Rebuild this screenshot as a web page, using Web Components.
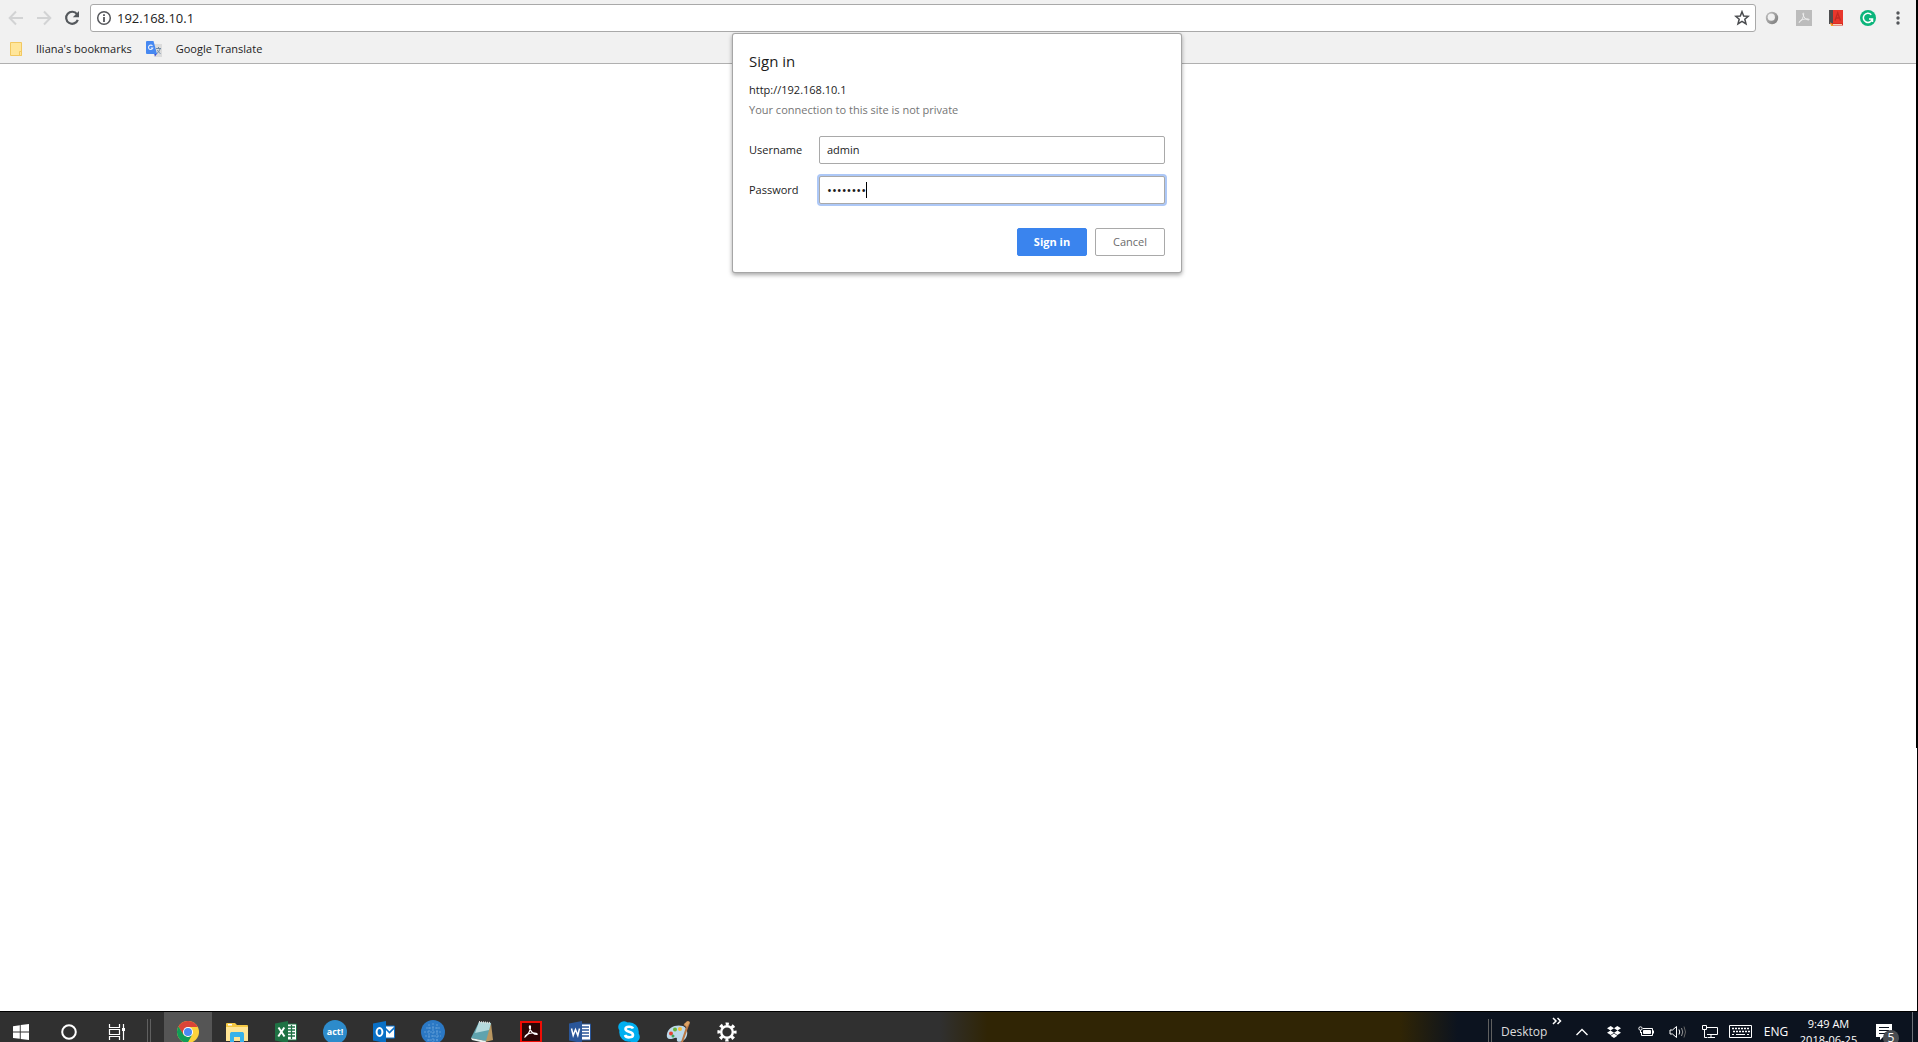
<!DOCTYPE html>
<html lang="en">
<head>
<meta charset="utf-8">
<title>192.168.10.1</title>
<style>
  html, body { margin: 0; height: 100%; }
  body { font: 11px/16px "Open Sans", "Noto Sans", sans-serif; color: #1c1c1c; background: #fff; overflow: hidden; }
</style>
</head>
<body>
<desktop-screen></desktop-screen>

<script>
const define = (name, html, setup) => customElements.define(name, class extends HTMLElement {
  constructor() {
    super();
    const root = this.attachShadow({ mode: 'open' });
    const t = document.createElement('template');
    t.innerHTML = '<style>*{box-sizing:border-box}svg{display:block;flex:none}button{font:inherit;color:inherit;background:none;border:0;padding:0;margin:0}</style>' + html;
    root.append(t.content.cloneNode(true));
    if (setup) setup.call(this, root);
  }
});

const icons = {
  back: '<svg width="16" height="16" fill="none" stroke="#d2d3d4" stroke-width="2"><path d="M15 8H2M8 1.5L1.7 8L8 14.500"/></svg>',
  forward: '<svg width="16" height="16" fill="none" stroke="#d2d3d4" stroke-width="2"><path d="M1 8H14M8 1.500L14.300 8L8 14.500"/></svg>',
  reload: '<svg width="16" height="16"><path d="M13 4.200A6 6 0 1 0 13.800 9.800" fill="none" stroke="#54585c" stroke-width="2.200"/><path d="M15 1V7.200H8.800Z" fill="#54585c"/></svg>',
  info: '<svg width="16" height="16"><circle cx="8" cy="8" r="6.300" fill="none" stroke="#54565a" stroke-width="1.500"/><path d="M7.100 4.200h1.800v1.700H7.100zM7.100 7h1.800v5H7.100z" fill="#54565a"/></svg>',
  star: '<svg width="16" height="16"><path d="M8 1.700L9.700 6L14.300 6.300L10.800 9.300L12 13.900L8 11.400L4 13.900L5.200 9.300L1.700 6.300L6.300 6Z" fill="none" stroke="#4a4c4f" stroke-width="1.500"/></svg>',
  ball: '<svg width="16" height="16"><defs><linearGradient id="g" x1="0" y1="0" x2="1" y2="1"><stop offset="0" stop-color="#c4c4c4"/><stop offset="1" stop-color="#777"/></linearGradient></defs><circle cx="8" cy="8" r="6.200" fill="url(#g)"/><circle cx="7.300" cy="7.200" r="3.600" fill="#f0f0f0"/></svg>',
  pdfgray: '<svg width="16" height="16"><path d="M0 0h16v16H0z" fill="#bcbcbc"/><path d="M3 12.500C5.500 11 8 7 7.700 3.500C7.500 2.500 6.500 3 7 4.500C8 8 10 10 13 10C14 9.500 12 8.500 9 9C6 9.500 3 11 3 12.500Z" fill="none" stroke="#eee"/></svg>',
  book: '<svg width="14" height="16"><path d="M0 0h4v14H0z" fill="#4d4d4f"/><path d="M4 0h10v14H4z" fill="#e8372c"/><path d="M1 13h13v2.500H3z" fill="#d92d22"/><path d="M4 14h9v1H4z" fill="#f5d3b8"/><path d="M6 10.500L8.700 3L11.400 10.500M7 8h3.600" fill="none" stroke="#c22a22" stroke-width="1.300"/><path d="M1 12l4 4H2z" fill="#f5a623"/></svg>',
  grammar: '<svg width="16" height="16"><circle cx="8" cy="8" r="8" fill="#0bb57b"/><path d="M11.300 4.700A4.600 4.600 0 1 0 12.400 9H9M12.500 9V12" fill="none" stroke="#fff" stroke-width="1.500"/></svg>',
  menu: '<svg width="16" height="16" fill="#54565a"><circle cx="8" cy="3" r="1.700"/><circle cx="8" cy="8" r="1.700"/><circle cx="8" cy="13" r="1.700"/></svg>',
  folder: '<svg width="12" height="14"><path d="M.5.500h11v13H.500z" fill="#ffe69b" stroke="#f2c861"/><path d="M9.500 9.500h2v4h-2z" fill="#ffe69b" stroke="#f2c861"/></svg>',
  translate: '<svg width="16" height="16"><path d="M7 3h9v13H8z" fill="#dcdcdc"/><path d="M10 7.500h5M12.500 6v2M14 8c-.5 2-2 4-3.500 4.500M11.500 9c.5 1.500 2 3 3 3.500" fill="none" stroke="#708aa5"/><path d="M8 12h3.500L9 15.500z" fill="#3b4fd0"/><path d="M1 0h6.500l3.500 13H1a1 1 0 0 1-1-1V1a1 1 0 0 1 1-1z" fill="#4688f1"/><path d="M6.500 5A2.200 2.200 0 1 0 6.800 7H4.800" fill="none" stroke="#e4edfb" stroke-width="1.100"/></svg>',
  windows: '<svg width="16" height="16" fill="#fff"><path d="M0 2.200L6.800 1.200V7.500H0zM7.700 1L16 0V7.500H7.700zM0 8.400H6.800V14.800L0 13.900zM7.700 8.400H16V16L7.700 15z"/></svg>',
  cortana: '<svg width="16" height="16"><circle cx="8" cy="8" r="6.800" fill="none" stroke="#fff" stroke-width="2"/></svg>',
  taskview: '<svg width="18" height="16" fill="none" stroke="#fff"><path d="M1.500 0V3.500H11.500V0M1.500 16V12.500H11.500V16M1.500 5.500h10v5h-10zM15.500 0v16" stroke-width="1.200"/><path d="M14 4h3v3h-3z" fill="#fff" stroke="none"/></svg>',
  chrome: '<svg width="22" height="22" viewBox="0 0 48 48"><circle cx="24" cy="24" r="24" fill="#fdd23c"/><path d="M3.200 12A24 24 0 0 1 44.800 12L45 13H24L13.500 30Z" fill="#db4437"/><path d="M3.200 12A24 24 0 0 0 23 48L33.500 29.500L24 35L14 29.500Z" fill="#109d58"/><circle cx="24" cy="24" r="11" fill="#fff"/><circle cx="24" cy="24" r="8.800" fill="#4a8af4"/></svg>',
  explorer: '<svg width="22" height="20"><path d="M0 2a1 1 0 0 1 1-1h8l2 2h10a1 1 0 0 1 1 1v15H0z" fill="#f5c944"/><path d="M0 5h22v14H0z" fill="#ffe595"/><path d="M2 2h4v1.500H2z" fill="#fff"/><path d="M4 20V11.500L5 10H17L18 11.500V20H14V15H8V20z" fill="#37b2ea"/></svg>',
  excel: '<svg width="22" height="22"><path d="M12 3h9.500v16H12z" fill="#fff" stroke="#1e7145"/><path d="M13 6h7M13 9h7M13 12h7M13 15h7M16.500 4v14" stroke="#1e7145" stroke-width="1.300"/><path d="M0 2.500L13 0v22L0 19.500z" fill="#1f7244"/><path d="M3.500 6.500l6 9M9.300 6.500l-6 9" stroke="#fff" stroke-width="2"/></svg>',
  outlook: '<svg width="22" height="22"><path d="M12 5h9.500v12H12z" fill="#fff" stroke="#0f70c7"/><path d="M12 7l4.500 4.500L22 6" fill="none" stroke="#0f70c7" stroke-width="1.600"/><path d="M0 2.500L13 0v22L0 19.500z" fill="#0970c6"/><ellipse cx="6.500" cy="11" rx="2.900" ry="3.900" fill="none" stroke="#fff" stroke-width="2"/></svg>',
  globe: '<svg width="24" height="24"><circle cx="12" cy="12" r="12" fill="#2b78c4"/><path d="M5 8h14M3 12h18M4 16h16M6 20h12M8 4v17M12 3v19M16 4v17" stroke="#69a5dc" stroke-width=".8" stroke-dasharray="2 1"/></svg>',
  notepad: '<svg width="22" height="22"><path d="M8 1L20 2L22 19L14 21z" fill="#b99761"/><path d="M8 1L20 2L15 20L0 17z" fill="#5fa3ae"/><path d="M8 1L20 2L18 9L4 12z" fill="#b5dade"/><path d="M0 17l15 3-1 2-13-3z" fill="#e9f3f0"/><path d="M8 1L20 2" stroke="#ddd" stroke-width="2" stroke-dasharray="1 1"/></svg>',
  acrobat: '<svg width="22" height="22"><path d="M1 1h20v20H1z" fill="#2b0605" stroke="#f00d05" stroke-width="2"/><path d="M5 16C8 14 11 9 10.500 5.500C10 4 9 5 9.500 7C11 11 14 13.500 17 13.500C18 12.500 15 11.800 12 12C8 12.500 5 14.500 5 16Z" fill="none" stroke="#fff" stroke-width="1.200"/></svg>',
  word: '<svg width="22" height="22"><path d="M12 3h9.500v16H12z" fill="#fff" stroke="#2a5699"/><path d="M13 6h7M13 9h7M13 12h7M13 15h7" stroke="#2a5699" stroke-width="1.300"/><path d="M0 2.500L13 0v22L0 19.500z" fill="#2a5699"/><path d="M2.500 7.500l1.700 7L6.500 8.500l2.300 6 1.700-7" fill="none" stroke="#fff" stroke-width="1.500"/></svg>',
  skype: '<svg width="22" height="22"><circle cx="11" cy="11" r="9.800" fill="#00aff0"/><circle cx="6" cy="6" r="5.800" fill="#00aff0"/><circle cx="16" cy="16" r="5.800" fill="#00aff0"/><path d="M15 7.500C14 5 7.500 5 7.500 8C7.500 11.500 15 10 15 14C15 17 8 17.200 7 14" fill="none" stroke="#fff" stroke-width="2.600"/></svg>',
  paint: '<svg width="24" height="22"><path d="M1 13C2 6 10 3 17 5C23 8 22 16 18 19C14 22 10 21 11 18C11 15 7 18 4 18C1 18 .5 16 1 13Z" fill="#bcd9ea"/><circle cx="5" cy="12.500" r="2" fill="#e34332"/><circle cx="9" cy="8.500" r="2" fill="#6ab53a"/><circle cx="14" cy="8" r="2" fill="#f4bd38"/><circle cx="7" cy="15" r="1.500" fill="#42a65b"/><path d="M15 21L20 6L17.500 4L21 0L24 2L22 7L17 21z" fill="#bb7845"/><path d="M18 3l4-3 2 1-3 5z" fill="#dca466"/></svg>',
  gear: '<svg width="20" height="20"><circle cx="10" cy="10" r="8" fill="none" stroke="#fff" stroke-width="3.200" stroke-dasharray="3.140 3.143" stroke-dashoffset="1.570"/><circle cx="10" cy="10" r="5.800" fill="none" stroke="#fff" stroke-width="2.400"/></svg>',
  up: '<svg width="14" height="14"><path d="M1.500 10L7 4.500L12.500 10" fill="none" stroke="#fff" stroke-width="1.400"/></svg>',
  dropbox: '<svg width="14" height="12" fill="#fff"><path d="M3.700 0L7 2.200L3.500 4.400L0 2.200zM10.300 0L14 2.200L10.500 4.400L7 2.200zM3.500 4.600L7 6.800L3.700 9L0 6.800zM10.500 4.600L14 6.800L10.300 9L7 6.800zM3.600 9.700L7 7.600L10.400 9.700L7 12z"/></svg>',
  battery: '<svg width="16" height="12" fill="none" stroke="#fff"><path d="M5 2.500h9.500v7h-11V6M15.500 4.500v3"/><path d="M5.500 4.500h7v3h-7z" fill="#fff"/><circle cx="2.500" cy="2.500" r="1.700"/><path d="M2.500 4v3"/></svg>',
  volume: '<svg width="18" height="14" fill="none" stroke="#fff"><path d="M1 5h2.500L7.500 1.500v11L3.500 9H1z"/><path d="M10 4.500q1.500 2.500 0 5"/><path d="M12.500 3q2.500 4 0 8" stroke="#999"/><path d="M15 1.500q3 5.500 0 11" stroke="#666"/></svg>',
  network: '<svg width="16" height="14" fill="none" stroke="#fff"><path d="M5 2.500h10.500v7H5M9 9.500v3M6 12.500h7M.5.500h4v4h-4zM2.500 5v7.500h3"/></svg>',
  keyboard: '<svg width="24" height="14" fill="none" stroke="#fff"><path d="M.5.500h22v12H.500z"/><path d="M3 3.500h18M4 6.500h17" stroke-dasharray="2 1" stroke-width="1.500"/><path d="M3 9.500h2M7 9.500h9M18 9.500h2"/></svg>',
  note: '<svg width="16" height="16" fill="none"><path d="M0 0h16v13H7l-3 3v-3H0z" fill="#fff"/><path d="M3 3.500h10M3 6.500h10M3 9.500h7" stroke="#0c131f"/></svg>'
};

define('ui-icon', '<style>:host{display:flex;align-items:center;justify-content:center}</style><div></div>', function (root) {
  root.querySelector('div').innerHTML = icons[this.getAttribute('name')] || '';
});

define('browser-toolbar', `
<style>
  :host { display: flex; align-items: center; padding: 4px 4px 0 2px; }
  button { height: 28px; flex: none; }
  .nav { width: 28px; margin: 0; }
  .ext { width: 32px; }
  .address { flex: 1; display: flex; align-items: center; gap: 5px; height: 28px; margin-left: 4px; padding: 0 5px;
    border: 1px solid #a9a9a9; border-radius: 3px; background: #fff; }
  input { flex: 1; min-width: 0; border: 0; outline: 0; padding: 0; background: none; color: #222; font: 13px/20px "Open Sans", "Noto Sans", sans-serif; }
</style>
<button class="nav" aria-label="Back"><ui-icon name="back"></ui-icon></button>
<button class="nav" aria-label="Forward"><ui-icon name="forward"></ui-icon></button>
<button class="nav" aria-label="Reload"><ui-icon name="reload"></ui-icon></button>
<div class="address">
  <ui-icon name="info"></ui-icon>
  <input type="text" aria-label="Address" value="192.168.10.1">
  <ui-icon name="star"></ui-icon>
</div>
<button class="ext" aria-label="Extension"><ui-icon name="ball"></ui-icon></button>
<button class="ext" aria-label="PDF"><ui-icon name="pdfgray"></ui-icon></button>
<button class="ext" aria-label="Dictionary"><ui-icon name="book"></ui-icon></button>
<button class="ext" aria-label="Grammar"><ui-icon name="grammar"></ui-icon></button>
<button class="nav" aria-label="Menu"><ui-icon name="menu"></ui-icon></button>`);

define('bookmark-bar', `
<style>
  :host { display: flex; align-items: center; gap: 14px; height: 32px; padding: 2px 10px 0; border-bottom: 1px solid #b0b0b0; }
  a { display: flex; align-items: center; gap: 14px; color: #1c1c1c; text-decoration: none; }
</style>
<a href="#"><ui-icon name="folder"></ui-icon>Iliana's bookmarks</a>
<a href="#"><ui-icon name="translate"></ui-icon>Google Translate</a>`);

define('sign-in-dialog', `
<style>
  :host { display: block; width: 448px; padding: 16px; background: #fff; border-radius: 2px; box-shadow: 0 0 0 1px #a6a6a6, 0 2px 4px 1px rgba(0,0,0,.35); }
  h1 { margin: 0 0 8px; font-size: 15px; line-height: 22px; font-weight: 400; }
  p { margin: 0; line-height: 20px; }
  .muted { color: #757575; }
  form { display: grid; grid-template-columns: 54px 1fr; column-gap: 16px; row-gap: 12px; align-items: center; margin-top: 16px; }
  input { width: 100%; height: 28px; padding: 0 7px 1px; border: 1px solid #a9a9a9; border-radius: 2px; outline: 0; background: #fff;
    color: #1c1c1c; font: 11px/16px "Open Sans", "Noto Sans", sans-serif; }
  .secret { position: relative; display: flex; }
  .secret input { font-size: 13px; box-shadow: 0 0 0 2px #adc8f7; }
  .caret { position: absolute; left: 47px; top: 6px; width: 1px; height: 16px; background: #000; }
  .actions { grid-column: 1 / -1; display: flex; justify-content: flex-end; gap: 8px; margin-top: 12px; }
  .actions button { width: 70px; height: 28px; border: 1px solid #a9a9a9; border-radius: 2px; color: #6b6b6b; }
  .actions .primary { border-color: #3a84ee; background: #3a84ee; color: #fff; font-weight: 700; }
</style>
<h1>Sign in</h1>
<p>http://192.168.10.1</p>
<p class="muted">Your connection to this site is not private</p>
<form onsubmit="return false">
  <label for="user">Username</label><input id="user" type="text" value="admin">
  <label for="pass">Password</label><div class="secret"><input id="pass" type="password" value="password"><span class="caret"></span></div>
  <div class="actions"><button class="primary">Sign in</button><button type="button">Cancel</button></div>
</form>`);

define('browser-window', `
<style>
  :host { display: flex; flex-direction: column; position: relative; background: #fff; }
  header { background: #f1f1f1; }
  sign-in-dialog { position: absolute; top: 34px; left: 0; right: 2px; margin: 0 auto; }
</style>
<header><browser-toolbar></browser-toolbar><bookmark-bar></bookmark-bar></header>
<main></main>
<sign-in-dialog></sign-in-dialog>`);

define('task-bar', `
<style>
  :host { display: block; height: 31px; overflow: hidden; border-top: 1px solid #000; color: #fff;
    background: linear-gradient(90deg, #303030 0 49%, #302505 51.500% 73%, #0c131f 76%); }
  .row { display: flex; align-items: center; height: 40px; }
  .row > *, button { flex: none; }
  button { height: 40px; }
  .first { width: 45px; padding-right: 3px; }
  .cell { width: 48px; }
  .apps { display: flex; gap: 1px; margin-left: 17px; }
  .active { background: #555; }
  .sep { width: 4px; height: 26px; border: 1px solid #606060; border-width: 0 1px; }
  .sep.left { margin-left: 6px; margin-right: -4px; }
  .space { flex: 1; }
  .act { display: inline-flex; align-items: center; justify-content: center; width: 24px; height: 24px; border-radius: 50%; background: #2d8bcb; color: #fff; font: 700 9px/12px "Open Sans", sans-serif; }
  .desktop { width: 44px; margin-left: 9px; margin-right: 1px; font-size: 12px; color: #ddd; text-align: left; }
  .more { width: 20px; height: 40px; padding: 5px 0 0 6px; line-height: 8px; }
  .tray { width: 32px; }
  .kb { width: 30px; }
  .lang { width: 40px; font-size: 12px; }
  .clock { width: 66px; text-align: center; padding-right: 1px; }
  .note { position: relative; width: 44px; margin-right: 6px; }
  .badge { position: absolute; left: 21px; top: 18px; width: 16px; height: 16px; border-radius: 50%; background: #4a4d52; font-size: 12px; line-height: 16px; }
  .show { width: 6px; border-left: 1px solid #6c7078; }
</style>
<div class="row">
  <button class="first" aria-label="Start"><ui-icon name="windows"></ui-icon></button>
  <button class="cell" aria-label="Search"><ui-icon name="cortana"></ui-icon></button>
  <button class="cell" aria-label="Task View"><ui-icon name="taskview"></ui-icon></button>
  <span class="sep left"></span>
  <div class="apps">
    <button class="cell active" aria-label="Chrome"><ui-icon name="chrome"></ui-icon></button>
    <button class="cell" aria-label="File Explorer"><ui-icon name="explorer"></ui-icon></button>
    <button class="cell" aria-label="Excel"><ui-icon name="excel"></ui-icon></button>
    <button class="cell"><span class="act">act!</span></button>
    <button class="cell" aria-label="Outlook"><ui-icon name="outlook"></ui-icon></button>
    <button class="cell" aria-label="Network"><ui-icon name="globe"></ui-icon></button>
    <button class="cell" aria-label="Notepad"><ui-icon name="notepad"></ui-icon></button>
    <button class="cell" aria-label="Acrobat"><ui-icon name="acrobat"></ui-icon></button>
    <button class="cell" aria-label="Word"><ui-icon name="word"></ui-icon></button>
    <button class="cell" aria-label="Skype"><ui-icon name="skype"></ui-icon></button>
    <button class="cell" aria-label="Paint"><ui-icon name="paint"></ui-icon></button>
    <button class="cell" aria-label="Settings"><ui-icon name="gear"></ui-icon></button>
  </div>
  <span class="space"></span>
  <span class="sep"></span>
  <button class="desktop">Desktop</button>
  <span class="more"><svg width="10" height="8" fill="none" stroke="#fff" stroke-width="1.500"><path d="M1 1l3 3-3 3M5.500 1l3 3-3 3"/></svg></span>
  <button class="tray" aria-label="Hidden icons"><ui-icon name="up"></ui-icon></button>
  <button class="tray" aria-label="Dropbox"><ui-icon name="dropbox"></ui-icon></button>
  <button class="tray" aria-label="Battery"><ui-icon name="battery"></ui-icon></button>
  <button class="tray" aria-label="Volume"><ui-icon name="volume"></ui-icon></button>
  <button class="tray" aria-label="Network"><ui-icon name="network"></ui-icon></button>
  <button class="kb" aria-label="Keyboard"><ui-icon name="keyboard"></ui-icon></button>
  <button class="lang">ENG</button>
  <div class="clock"><div>9:49 AM</div><div>2018-06-25</div></div>
  <button class="note" aria-label="Notifications"><ui-icon name="note"></ui-icon><span class="badge">5</span></button>
  <button class="show" aria-label="Show desktop"></button>
</div>`);

define('desktop-screen', `
<style>
  :host { display: flex; flex-direction: column; height: 100vh; overflow: hidden; }
  .top { flex: 1; min-height: 0; display: flex; }
  browser-window { flex: 1; min-width: 0; }
  .edge { width: 2px; display: flex; flex-direction: column; }
  .edge i { flex: 26; border-right: 1px solid #000; }
  .edge i:first-child { flex: 74; background: #000; }
</style>
<div class="top"><browser-window></browser-window><div class="edge"><i></i><i></i></div></div>
<task-bar></task-bar>`);
</script>
</body>
</html>
